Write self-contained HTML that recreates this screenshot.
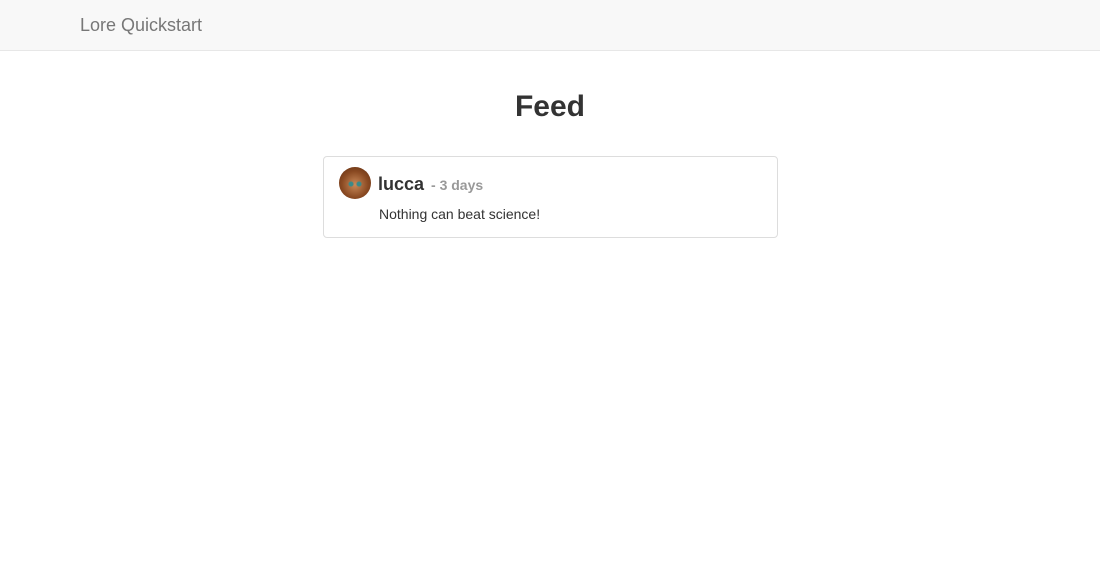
<!DOCTYPE html>
<html><head><meta charset="utf-8"><style>
body{margin:0;font-family:"Liberation Sans",Arial,sans-serif;background:#fff;color:#333;width:1100px;height:574px;overflow:hidden}
.nav{height:51px;background:#f8f8f8;border-bottom:1px solid #e7e7e7;box-sizing:border-box}
.brand{position:absolute;left:80px;top:15px;font-size:18px;color:#777;line-height:20px}
h1{position:absolute;left:0;width:1100px;text-align:center;top:90px;margin:0;font-size:30px;font-weight:bold;line-height:34px;color:#333}
.card{position:absolute;left:323px;top:156px;width:453px;height:80px;border:1px solid #ddd;border-radius:4px}
.av{position:absolute;left:15px;top:10px;width:32px;height:32px;border-radius:50%;background:radial-gradient(circle at 50% 55%,#c98a5a 0,#8a4a22 55%,#5a2a10 100%)}
.av:before{content:"";position:absolute;left:8px;top:14px;width:16px;height:6px;background:radial-gradient(circle at 25% 50%,#3a8a8a 2px,transparent 3px),radial-gradient(circle at 75% 50%,#3a8a8a 2px,transparent 3px)}
.name{position:absolute;left:54px;top:17px;font-size:18px;font-weight:bold;color:#333;line-height:20px}
.time{font-size:14px;color:#999;margin-left:2px}
.text{position:absolute;left:55px;top:49px;font-size:14px;color:#333;line-height:16px}
</style></head><body>
<div class="nav"><div class="brand">Lore Quickstart</div></div>
<h1>Feed</h1>
<div class="card"><div class="av"></div><div class="name">lucca <span class="time">- 3 days</span></div><div class="text">Nothing can beat science!</div></div>
</body></html>
